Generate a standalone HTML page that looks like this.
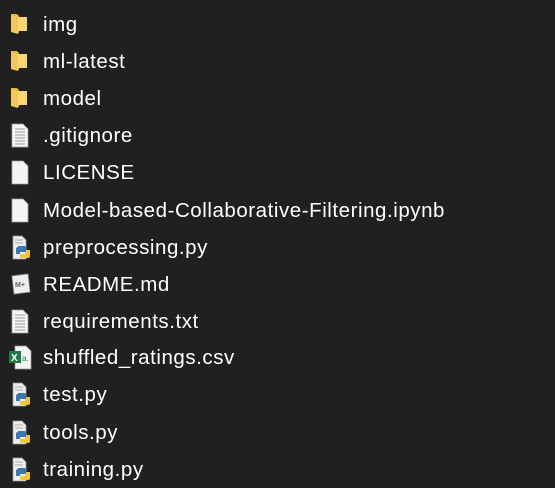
<!DOCTYPE html>
<html><head><style>
body{margin:0;width:555px;height:486px;background:#202020;overflow:hidden;font-family:"Liberation Sans",sans-serif;}
.r{position:absolute;left:0;height:37px;width:555px;}
.t{position:absolute;left:43px;top:7px;font-size:20.5px;letter-spacing:0.55px;color:#fff;line-height:24px;white-space:nowrap;}
.i{position:absolute;left:9px;top:6px;}
</style></head><body>
<svg width="0" height="0" style="position:absolute">
<defs>
<g id="fold"><path d="M2 2h6l2 2v17l-8-1z" fill="#e8b53b"/><path d="M6 5h12v14H6z" fill="#f8d775"/><path d="M2 3l7 2v17l-7-2z" fill="#f2c75a"/></g>
<g id="doc"><path d="M3 1h11l5 5v18H3z" fill="#f5f5f5" stroke="#a0a0a0" stroke-width="0.8"/></g>
<g id="txt"><use href="#doc"/><path d="M6 6h10M6 9h10M6 12h10M6 15h10M6 18h10M6 21h10" stroke="#999" stroke-width="1"/></g>
<g id="py"><path d="M4 1h9l4 4v19H4z" fill="#eee" stroke="#999" stroke-width="0.8"/><path d="M6 5h8M6 8h8" stroke="#aaa"/><path d="M9 11h6a2 2 0 0 1 2 2v4h-6v2H7v-5a2 2 0 0 1 2-2z" fill="#3b77b0"/><path d="M11 19h6v-4h4v6a2 2 0 0 1-2 2h-6a2 2 0 0 1-2-2z" fill="#f4c535"/></g>
</defs></svg>

<div class="r" style="top:6px"><svg class="i" width="22" height="26"><use href="#fold"/></svg><div class="t">img</div></div>
<div class="r" style="top:43px"><svg class="i" width="22" height="26"><use href="#fold"/></svg><div class="t">ml-latest</div></div>
<div class="r" style="top:80px"><svg class="i" width="22" height="26"><use href="#fold"/></svg><div class="t">model</div></div>
<div class="r" style="top:117px"><svg class="i" width="22" height="26"><use href="#txt"/></svg><div class="t">.gitignore</div></div>
<div class="r" style="top:154px"><svg class="i" width="22" height="26"><use href="#doc"/></svg><div class="t">LICENSE</div></div>
<div class="r" style="top:192px"><svg class="i" width="22" height="26"><use href="#doc"/></svg><div class="t">Model-based-Collaborative-Filtering.ipynb</div></div>
<div class="r" style="top:229px"><svg class="i" width="24" height="26"><use href="#py"/></svg><div class="t">preprocessing.py</div></div>
<div class="r" style="top:266px"><svg class="i" width="24" height="26"><path d="M3 4l16-2 2 18-16 2z" fill="#eee" stroke="#999" stroke-width="0.8"/><text x="6" y="15" font-size="7" font-family="Liberation Sans" font-weight="bold" fill="#666">M+</text></svg><div class="t">README.md</div></div>
<div class="r" style="top:303px"><svg class="i" width="22" height="26"><use href="#txt"/></svg><div class="t">requirements.txt</div></div>
<div class="r" style="top:339px"><svg class="i" width="26" height="26"><path d="M6 1h11l5 5v18H6z" fill="#f5f5f5" stroke="#999" stroke-width="0.8"/><rect x="0" y="6" width="12" height="12" fill="#1e7a45"/><text x="2" y="16" font-size="10" font-weight="bold" font-family="Liberation Sans" fill="#fff">X</text><text x="13" y="16" font-size="8" font-family="Liberation Sans" fill="#1e7a45">a.</text></svg><div class="t">shuffled_ratings.csv</div></div>
<div class="r" style="top:376px"><svg class="i" width="24" height="26"><use href="#py"/></svg><div class="t">test.py</div></div>
<div class="r" style="top:414px"><svg class="i" width="24" height="26"><use href="#py"/></svg><div class="t">tools.py</div></div>
<div class="r" style="top:451px"><svg class="i" width="24" height="26"><use href="#py"/></svg><div class="t">training.py</div></div>
</body></html>
